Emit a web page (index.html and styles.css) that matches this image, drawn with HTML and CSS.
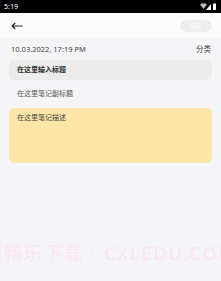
FILE: index.html
```html
<!DOCTYPE html>
<html>
<head>
<meta charset="utf-8">
<link rel="stylesheet" href="styles.css">
</head>
<body>
<div class="status">
  <span class="time">5:19</span>
  <span class="icons">
    <svg width="16" height="7" viewBox="0 0 16 7">
      <path d="M0 1.5 Q3.5 -1 7 1.5 L3.5 6 Z" fill="#bbb"/>
      <path d="M6 7 L11 1 L11 7 Z" fill="#fff"/>
      <rect x="13" y="0.5" width="3" height="6.5" rx="0.5" fill="#fff"/>
    </svg>
  </span>
</div>
<div class="header">
  <svg class="back" width="12" height="8" viewBox="0 0 12 8">
    <path d="M11.5 4 H1.2 M4.2 1 L1.2 4 L4.2 7" stroke="#222" stroke-width="1.2" fill="none"/>
  </svg>
  <div class="save">保存</div>
</div>
<div class="main">
  <div class="meta">
    <span>10.03.2022, 17:19 PM</span>
    <span>分类</span>
  </div>
  <div class="title">在这里输入标题</div>
  <div class="subtitle">在这里笔记副标题</div>
  <div class="desc">在这里笔记描述</div>
  <div class="watermark">源畅乐下载 · CXLEDU.COM</div>
</div>
</body>
</html>
```
FILE: styles.css
```css
html, body {
  margin: 0;
  padding: 0;
}
body {
  width: 221px;
  height: 281px;
  overflow: hidden;
  background: #f5f5f7;
  font-family: "Noto Sans", "Noto Sans CJK SC", sans-serif;
  color: #333;
}
.status {
  height: 13px;
  background: #000;
  display: flex;
  justify-content: space-between;
  align-items: center;
  padding: 0 5px 0 4px;
}
.time {
  color: #fff;
  font-size: 7px;
  line-height: 7px;
}
.icons {
  display: flex;
}
.header {
  height: 25px;
  background: #fbfbfb;
  display: flex;
  align-items: center;
  justify-content: space-between;
  padding: 0 9px 0 11px;
}
.save {
  width: 32px;
  height: 12px;
  border-radius: 6px;
  background: #eeeeee;
  color: #fafafa;
  font-size: 6px;
  line-height: 12px;
  text-align: center;
}
.main {
  padding: 4px 9px 0 9px;
  position: relative;
}
.meta {
  display: flex;
  justify-content: space-between;
  font-size: 7.5px;
  color: #444;
  padding: 0 1px 0 2px;
  height: 14px;
  line-height: 14px;
}
.title {
  margin-top: 4px;
  height: 20px;
  border-radius: 5px;
  background: #ebebeb;
  font-size: 7px;
  font-weight: bold;
  color: #333;
  line-height: 20px;
  padding-left: 8px;
}
.subtitle {
  height: 28px;
  line-height: 28px;
  font-size: 7px;
  color: #555;
  padding-left: 8px;
}
.desc {
  height: 49px;
  border-radius: 5px;
  background: #fde6a8;
  font-size: 7px;
  color: #444;
  padding: 6px 8px 0 8px;
  line-height: 8px;
}
.watermark {
  position: absolute;
  left: -16px;
  top: 201px;
  white-space: nowrap;
  font-size: 18px;
  color: #fce4f3;
  letter-spacing: 2px;
}
```
